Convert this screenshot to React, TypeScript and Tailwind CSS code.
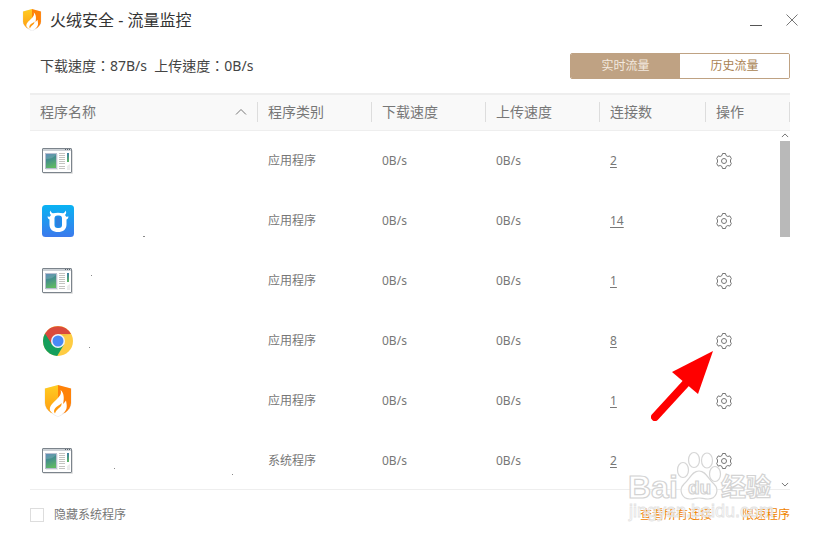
import React, { useState } from "react";

type IconKind = "window" | "bull" | "chrome" | "shield";

interface Program {
  icon: IconKind;
  name: string;
  category: string;
  connections: number;
}

const programs: Program[] = [
  { icon: "window", name: "program-1", category: "应用程序", connections: 2 },
  { icon: "bull", name: "program-2", category: "应用程序", connections: 14 },
  { icon: "window", name: "program-3", category: "应用程序", connections: 1 },
  { icon: "chrome", name: "program-4", category: "应用程序", connections: 8 },
  { icon: "shield", name: "program-5", category: "应用程序", connections: 1 },
  { icon: "window", name: "program-6", category: "系统程序", connections: 2 },
];

const columns = ["程序类别", "下载速度", "上传速度", "连接数", "操作"];

function ShieldIcon({ className, id }: { className: string; id: string }) {
  return (
    <svg className={className} viewBox="0 0 28 32" aria-hidden="true">
      <defs>
        <linearGradient id={id} x1="0" y1="0" x2="0" y2="1">
          <stop offset="0" stopColor="#ffcd22" />
          <stop offset="1" stopColor="#ff9a10" />
        </linearGradient>
      </defs>
      <path d="M14 .5 27.500 3.500V18c0 6-7 11.500-13.500 14C7.500 29.500.5 24 .5 18V3.500Z" fill="#e9e9ec" />
      <path d="M14 0 1 3.500V18c0 3.500 2.500 7 5.500 9.500L14 30Z" fill={`url(#${id})`} />
      <path d="M14 0 27 3.500V18c0 3.500-2.500 7-5.500 9.500L14 30Z" fill="#ff8208" />
      <path
        d="M16.500 5c1.500 4-1 6.500-4.500 10C8.500 18.500 5 21.500 6 25.500c1.500 2.500 5 4.500 8 6 3.500-1.500 7.500-4.500 8.500-8 .7-2.500 0-5-.5-8-1 1.500-2 2.500-3 3.500 1.500-5.500 1-11.500-2.500-14Z"
        fill="#fff"
      />
      <path d="M17.500 18c.5 3-1.500 4-3.500 6-1.500 1.500-2.500 2.500-3 4.500-2-2.500-.5-5 2-7 2-1.500 3.500-2 4.500-3.500Z" fill="#ff980c" />
    </svg>
  );
}

function WindowIcon({ id }: { id: string }) {
  return (
    <svg className="h-8 w-8" viewBox="0 0 32 32" aria-hidden="true">
      <defs>
        <linearGradient id={id} x1="0" y1="0" x2=".3" y2="1">
          <stop offset="0" stopColor="#3f78ac" />
          <stop offset=".5" stopColor="#46918a" />
          <stop offset="1" stopColor="#5fb765" />
        </linearGradient>
      </defs>
      <rect x="1" y="5" width="30" height="24" rx="1" fill="#e0e0e0" />
      <rect x=".5" y="3.500" width="29" height="24" rx=".5" fill="#fff" stroke="#7c848c" />
      <path d="M1 5h28" stroke="#ccd1d6" strokeWidth="2" />
      <path d="M23 4.500h1m1 0h1m1 0h1" stroke="#59636c" />
      <rect x="4" y="9" width="12" height="16" fill="#ececec" />
      <rect x="3.500" y="8.500" width="11" height="15" fill={`url(#${id})`} stroke="#b9bfd0" />
      <path d="M4 14c4 0 7-1 10-4V9H4Z" fill="#fff" opacity=".16" />
      <path d="M17 8.500h6m-6 2h6m-6 2h6m-6 2h6m-6 2h6m-6 2h6m-6 3h6m-6 2h6" stroke="#c4c4c0" />
      <rect x="25" y="8" width="2" height="9" fill={`url(#${id})`} />
      <path d="M25 25v-4l3-2v6Z" fill="#ececec" />
    </svg>
  );
}

function BullIcon() {
  return (
    <svg className="h-8 w-8" viewBox="0 0 32 32" aria-hidden="true">
      <defs>
        <linearGradient id="bull" x1="0" y1="0" x2="0" y2="1">
          <stop offset="0" stopColor="#09b3f3" />
          <stop offset="1" stopColor="#3c79ec" />
        </linearGradient>
      </defs>
      <rect width="32" height="32" rx="3.500" fill="url(#bull)" />
      <path
        d="M8.500 5.500C7.500 7 7.500 8.500 9 10c-.6.600-1 1.200-1.200 1.800L5.500 11.500c.2 1.500.8 2.500 2 3v5c0 5 3.500 7.500 8.500 7.500s8.500-2.500 8.500-7.500v-5c1.200-.5 1.800-1.500 2-3l-2.300.3C24 11.200 23.600 10.600 23 10c1.500-1.500 1.500-3 .5-4.500-.3 1.500-1.200 2.500-2.500 2.800-3-.9-7-.9-10 0C9.700 8 8.800 7 8.500 5.500Z"
        fill="#fff"
      />
      <rect x="12.500" y="10.500" width="7.500" height="12.500" rx="3" fill="#1e8eec" />
      <rect x="14" y="12" width="4" height="9.500" rx="2" fill="#2f7fdd" />
    </svg>
  );
}

function ChromeIcon() {
  return (
    <svg className="h-8 w-8" viewBox="0 0 32 32" aria-hidden="true">
      <circle cx="16" cy="16" r="15" fill="#fecc43" />
      <path d="M16 16 3 8.500A15 15 0 0 0 15.200 31L22 19.500Z" fill="#149f5c" />
      <path d="M3 8.500A15 15 0 0 1 29 9H16l-6 10.400Z" fill="#da4a3c" />
      <path d="M16 9h13l-10 3Z" fill="#e8b53a" opacity=".5" />
      <circle cx="16" cy="16" r="7" fill="#f1f3f7" />
      <circle cx="16" cy="16" r="5.500" fill="#4889f4" />
    </svg>
  );
}

function ProgramIcon({ kind, id }: { kind: IconKind; id: string }) {
  if (kind === "window") return <WindowIcon id={id} />;
  if (kind === "bull") return <BullIcon />;
  if (kind === "chrome") return <ChromeIcon />;
  return (
    <span className="flex h-8 w-8 justify-center">
      <ShieldIcon className="h-8 w-7" id={id} />
    </span>
  );
}

function GearIcon() {
  return (
    <svg className="h-4 w-4" viewBox="0 0 16 16" fill="none" stroke="#777" aria-hidden="true">
      <path d="M6.500 .5h3l.5 2 1.800 1 2-.6 1.500 2.600-.8 1.500v2l.8 1.500-1.500 2.600-2-.6-1.800 1-.5 2h-3l-.5-2-1.800-1-2 .6L.7 10.500 1.500 9V7L.7 5.500l1.500-2.600 2 .6 1.800-1Z" strokeLinejoin="round" />
      <circle cx="8" cy="8" r="2.500" />
    </svg>
  );
}

function Chevron({ className, down = false }: { className: string; down?: boolean }) {
  return (
    <svg className={className} viewBox="0 0 12 8" fill="none" stroke="currentColor" aria-hidden="true">
      <path d={down ? "m1 1.500 5 5 5-5" : "m1 6.500 5-5 5 5"} vectorEffect="non-scaling-stroke" />
    </svg>
  );
}

function Watermark() {
  return (
    <svg className="pointer-events-none absolute right-10 bottom-3 h-20 w-40" viewBox="0 0 160 80" aria-hidden="true">
      <g fill="#fff" fillOpacity=".8" stroke="#d6d6d6" strokeWidth="1.200">
        <ellipse cx="63" cy="22" rx="5.500" ry="7.500" />
        <ellipse cx="74" cy="12" rx="5.500" ry="7.500" />
        <ellipse cx="87" cy="12.500" rx="5.500" ry="7.500" />
        <ellipse cx="95" cy="26" rx="5.500" ry="7.500" />
        <path d="M79 23c7 0 9 8 15 13 6 6 2 15-6 15-4 0-6-1-9-1s-5 1-9 1c-8 0-12-9-6-15 6-5 8-13 15-13Z" />
      </g>
      <g fill="#fff" stroke="#d3d3d3" strokeWidth="1.200" className="font-['Liberation_Sans','Noto_Sans_CJK_SC',sans-serif] font-bold">
        <text x="8" y="50" fontSize="32">Bai</text>
        <text x="68" y="46" fontSize="19">du</text>
        <text x="101" y="48" fontSize="25">经验</text>
      </g>
      <text x="9" y="69" fontSize="18" fill="#fff" fillOpacity=".55" stroke="#e3e3e3" strokeWidth=".8" className="font-['Liberation_Sans',sans-serif]">
        jingyan.baidu.com
      </text>
    </svg>
  );
}

export default function App() {
  const [tab, setTab] = useState<"live" | "history">("live");
  const tabClass = (active: boolean) =>
    active ? "flex-1 bg-[#bfa283] text-[#f3e9df]" : "flex-1 bg-white text-[#a97f50]";

  return (
    <div className="relative flex h-screen flex-col overflow-hidden bg-white px-[30px] font-['Noto_Sans','Noto_Sans_CJK_SC',sans-serif] text-xs text-[#777]">
      <header className="-mx-2 flex h-10 items-center gap-2">
        <ShieldIcon className="h-[22px] w-5" id="brand" />
        <h1 className="flex-1 text-base text-[#333]">火绒安全 - 流量监控</h1>
        <div className="flex gap-6">
          <button aria-label="最小化" className="flex h-4 w-3 items-end pb-[2px]">
            <span className="h-px w-3 bg-[#555]" />
          </button>
          <button aria-label="关闭" className="h-4 w-3">
            <svg className="h-4 w-3" viewBox="0 0 12 16" stroke="#777">
              <path d="m.5 2.500 11 11m0-11-11 11" />
            </svg>
          </button>
        </div>
      </header>

      <div className="flex h-[52px] items-center justify-between">
        <p className="pl-[10px] font-['Noto_Sans','Noto_Sans_CJK_TC',sans-serif] text-sm whitespace-pre text-[#444]">下载速度：87B/s  上传速度：0B/s</p>
        <div className="flex h-[26px] w-[220px] overflow-hidden rounded-[2px] border border-[#bfa283]">
          <button className={tabClass(tab === "live")} onClick={() => setTab("live")}>实时流量</button>
          <button className={tabClass(tab === "history")} onClick={() => setTab("history")}>历史流量</button>
        </div>
      </div>

      <main className="relative mt-px min-h-0 flex-1 overflow-hidden border-b border-[#eee]">
        <table className="w-full table-fixed border-collapse text-left">
          <colgroup>
            <col />
            <col className="w-[114px]" />
            <col className="w-[114px]" />
            <col className="w-[114px]" />
            <col className="w-[106px]" />
            <col className="w-[84px]" />
          </colgroup>
          <thead className="bg-[#f9f9f9] text-sm shadow-[inset_0_2px_#eee,inset_0_-1px_#eee]">
            <tr className="h-[38px]">
              <th className="p-0 font-normal">
                <div className="flex h-5 items-center justify-between border-r border-[#ddd] pr-[10px] pl-[10px]">
                  程序名称
                  <Chevron className="h-2 w-3" />
                </div>
              </th>
              {columns.map((c) => (
                <th key={c} className="p-0 font-normal">
                  <div className="flex h-5 items-center border-r border-[#ddd] pl-[10px]">{c}</div>
                </th>
              ))}
            </tr>
          </thead>
          <tbody>
            {programs.map((p) => (
              <tr key={p.name} className="h-[60px]">
                <td className="py-0 pr-0 pl-3"><ProgramIcon kind={p.icon} id={p.name} /></td>
                <td className="py-0 pr-0 pl-[10px]">{p.category}</td>
                <td className="py-0 pr-0 pl-[10px]">0B/s</td>
                <td className="py-0 pr-0 pl-[10px]">0B/s</td>
                <td className="py-0 pr-0 pl-[10px]">
                  <a href="#connections" className="underline underline-offset-2">{p.connections}</a>
                </td>
                <td className="py-0 pr-0 pl-[10px]">
                  <button aria-label="操作" className="block"><GearIcon /></button>
                </td>
              </tr>
            ))}
          </tbody>
        </table>
        <div className="absolute top-10 right-0 bottom-0 flex w-[10px] flex-col items-center justify-between pb-[2px]">
          <div className="flex w-full flex-col items-center gap-[3px]">
            <Chevron className="h-[5px] w-2" />
            <div className="h-24 w-full bg-[#b9b9b9]" />
          </div>
          <Chevron className="h-[5px] w-2" down />
        </div>
        <svg className="pointer-events-none absolute top-[258px] right-[77px] h-[70px] w-[62px]" viewBox="0 0 62 70" fill="#f00" aria-hidden="true">
          <path d="M4 66 37 30" stroke="#f00" strokeWidth="8" strokeLinecap="round" />
          <path d="M62 0 21 21 47 43Z" />
        </svg>
      </main>

      <footer className="flex h-[50px] items-center justify-between">
        <label className="flex items-center gap-[10px]">
          <input type="checkbox" className="h-[14px] w-[14px] appearance-none border border-[#ddd] bg-white checked:bg-[#bfa283]" />
          隐藏系统程序
        </label>
        <nav className="flex gap-[30px] text-[#f08300]">
          <a href="#all">查看所有连接</a>
          <a href="#limited">限速程序</a>
        </nav>
      </footer>
      <svg className="pointer-events-none absolute top-[230px] left-20 h-[250px] w-40" viewBox="0 0 160 250" aria-hidden="true">
        <path d="M63 6.500h2M11 45.500h1M9 117.500h1M34 238.500h1M152 244.500h1" stroke="#888" />
      </svg>
      <Watermark />
    </div>
  );
}
